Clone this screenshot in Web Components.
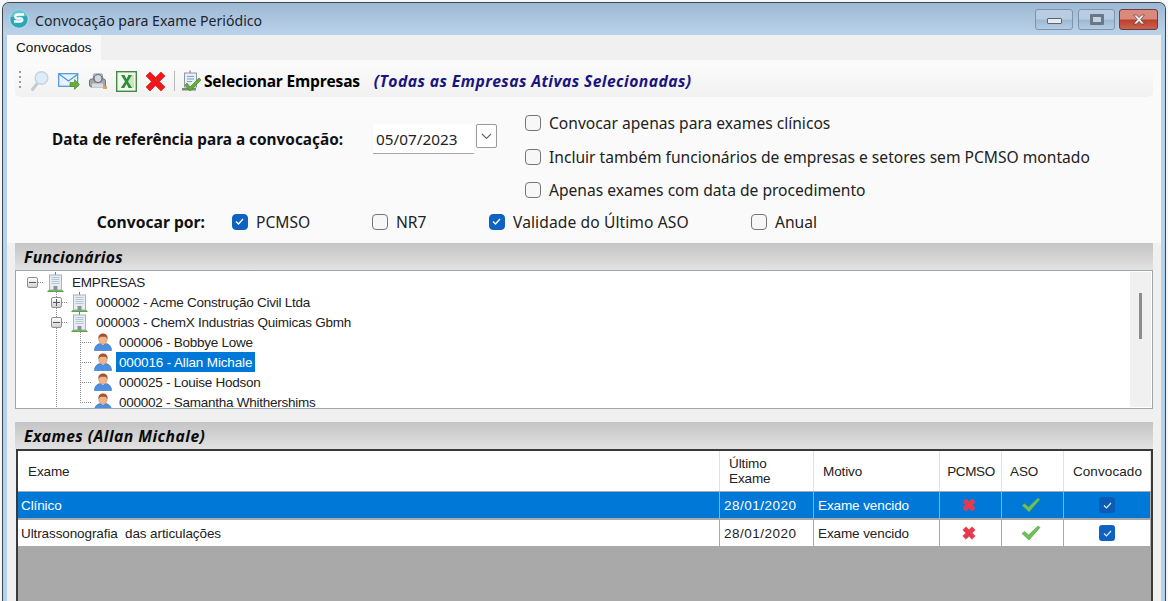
<!DOCTYPE html>
<html>
<head>
<meta charset="utf-8">
<title>Convocação para Exame Periódico</title>
<style>
    html, body { margin: 0; height: 100%; overflow: hidden; background: #f4f6f8; }
</style>
</head>
<body>
<app-window caption="Convocação para Exame Periódico">
    <tab-strip label="Convocados"></tab-strip>
    <page-form>
        <tool-bar></tool-bar>
        <convoke-form></convoke-form>
    </page-form>
    <page-lists>
        <section-header>Funcionários</section-header>
        <tree-view>
            <tree-node guides="" expander="minus" icon="building" kind="root">EMPRESAS</tree-node>
            <tree-node guides="b" expander="plus" icon="building" kind="company">000002 - Acme Construção Civil Ltda</tree-node>
            <tree-node guides="b" expander="minus" icon="building" kind="company">000003 - ChemX Industrias Quimicas Gbmh</tree-node>
            <tree-node guides="bv" icon="person" kind="person">000006 - Bobbye Lowe</tree-node>
            <tree-node guides="bv" icon="person" kind="person" selected>000016 - Allan Michale</tree-node>
            <tree-node guides="bv" icon="person" kind="person">000025 - Louise Hodson</tree-node>
            <tree-node guides="bl" icon="person" kind="person">000002 - Samantha Whithershims</tree-node>
        </tree-view>
        <section-header class="second">Exames (Allan Michale)</section-header>
        <exam-table>
            <exam-row selected exam="Clínico" last="28/01/2020" reason="Exame vencido"></exam-row>
            <exam-row exam="Ultrassonografia  das articulações" last="28/01/2020" reason="Exame vencido"></exam-row>
        </exam-table>
    </page-lists>
</app-window>

<script>
const ICONS = {
    logo: `<svg viewBox="0 0 20 20" width="20" height="20"><circle cx="10" cy="10" r="9.3" fill="#2aa7b8" stroke="#cfe3ea" stroke-width="1"/><path d="M2 8a8 8 0 0 1 16-1z" fill="#7fd0dc" opacity=".7"/><path d="M15 5.5H8.5C6 5.5 5.5 9 8 9.5h4c2 .3 1.6 3-.5 3H5" fill="none" stroke="#fff" stroke-width="2.4"/></svg>`,
    search: `<svg viewBox="0 0 20 22" width="20" height="22"><path d="M9 12.5 3.5 19.5" stroke="#c9c9c9" stroke-width="3" stroke-linecap="round"/><circle cx="12.5" cy="8" r="6.3" fill="#dcecf8" stroke="#c5d3de" stroke-width="1.4"/></svg>`,
    mail: `<svg viewBox="0 0 22 20" width="22" height="20"><rect x=".7" y="2.7" width="19" height="12.6" fill="#e6f2fc" stroke="#4d94d6" stroke-width="1.2"/><path d="M1 3l9.500 7 9.500-7" fill="none" stroke="#4d94d6" stroke-width="1.2"/><path d="M12 11.500h4.500V8.500l5 5-5 5v-3H12z" fill="#6cab3a" stroke="#487f22" stroke-width=".6"/></svg>`,
    print: `<svg viewBox="0 0 20 20" width="20" height="20"><path d="M6 3h8l1 5H5z" fill="#eef1f4" stroke="#8a8f96"/><rect x="1.500" y="8" width="16" height="8" rx="2" fill="#a4a8ae" stroke="#70757c"/><rect x="4" y="12.500" width="11" height="4" fill="#d8dadd"/><circle cx="10" cy="7.500" r="4" fill="#cfd9e4" stroke="#666c74" stroke-width="1.2"/><rect x="15" y="15" width="4" height="3" fill="#d7a651"/></svg>`,
    excel: `<svg viewBox="0 0 21 21" width="21" height="21"><rect x=".7" y=".7" width="19.600" height="19.600" fill="#f3f8ee" stroke="#3f8a3c" stroke-width="1.400"/><rect x="12" y="4" width="6" height="13" fill="#cfe4c4"/><path d="M5 4h3.500l2 4 2-4H16l-4 6.500 4.200 6.500h-3.600l-2.100-4-2.200 4H4.800L9 10.500z" fill="#2f8f35"/></svg>`,
    del: `<svg viewBox="0 0 21 21" width="21" height="21"><path d="M1 5l4-4 5.500 5.500L16 1l4 4-5.500 5.500L20 16l-4 4-5.500-5.500L5 20l-4-4 5.500-5.500z" fill="#f01818" stroke="#cf1212" stroke-width=".6"/></svg>`,
    doc: `<svg viewBox="0 0 21 22" width="21" height="22"><path d="M9 .5v3" stroke="#b04a3a"/><rect x="3.500" y="3" width="12" height="14" fill="#e8eef6" stroke="#8d97a5"/><path d="M6 6.500h7M6 9h7M6 11.500h5" stroke="#7fa3cc"/><path d="M1 18h14v2.500H1z" fill="#7a8b76"/><path d="M6 13l3 4 9-9 2 2-11 11-5-6z" fill="#5fae3a" stroke="#3f7f24" stroke-width=".6"/></svg>`,
    building: `<svg viewBox="0 0 17 20" width="17" height="20"><path d="M8.500 0v3" stroke="#c8574d"/><path d="M0 20l2.500-3h12l2.500 3z" fill="#57a845"/><rect x="2.500" y="3" width="12" height="15" fill="#e8ecf0" stroke="#a9b2bb"/><path d="M4.500 5.500h8M4.500 7.500h8M4.500 9.500h8M4.500 11.500h8" stroke="#b0c8dc" stroke-width="1.200"/><rect x="6.500" y="14" width="4" height="4" fill="#8b9299"/></svg>`,
    person: `<svg viewBox="0 0 18 18" width="18" height="18"><path d="M.5 17.500c0-5 3.500-6.500 5.500-7l3 2 3-2c2 .5 5.500 2 5.500 7z" fill="#4d8fe0" stroke="#2f6cbc" stroke-width=".6"/><ellipse cx="9" cy="6.500" rx="4.200" ry="4.800" fill="#f0b48c" stroke="#b97a50" stroke-width=".5"/><path d="M4.500 6C4 2 6.500.5 9 .5s5 1.500 4.500 5.500C12.500 4 11 3.500 9 3.800 7 3.500 5.500 4 4.500 6z" fill="#a5532a"/></svg>`,
    cross: `<svg viewBox="0 0 14 14" width="14" height="14"><path d="M.8 4 4 .8 7 3.800 10 .8 13.200 4 10.200 7l3 3-3.200 3.200-3-3-3 3L.8 10l3-3z" fill="#e8384e" stroke="#d8475c" stroke-width=".6" stroke-linejoin="round"/></svg>`,
    tick: `<svg viewBox="0 0 20 16" width="20" height="16"><path d="M1 8.500 3.500 6.500 7.500 10 17 1l2 1.500L8 15z" fill="#6cc15c" stroke="#4d9f40" stroke-width=".6" stroke-linejoin="round"/></svg>`
};

class UiIcon extends HTMLElement {
    connectedCallback() {
        this.attachShadow({ mode: 'open' });
        this.shadowRoot.innerHTML = `
            <style>:host { display: inline-flex; flex: none; } svg { display: block; }</style>
            ${ICONS[this.getAttribute('name')] || ''}`;
    }
}

class AppWindow extends HTMLElement {
    constructor() {
        super();
        this.attachShadow({ mode: 'open' });
        this.shadowRoot.innerHTML = `
            <style>
                :host {
                    display: flex;
                    flex-direction: column;
                    box-sizing: border-box;
                    margin: 2px 2px 0;
                    height: 599px;
                    border: 1px solid #3e444b;
                    border-bottom: 0;
                    border-radius: 7px 7px 0 0;
                    overflow: hidden;
                    background: #b5d2ec;
                    font-family: "Noto Sans", sans-serif;
                }
                .title {
                    display: flex;
                    align-items: center;
                    height: 32px;
                    flex: none;
                    padding: 0 7px 0 6px;
                    background: linear-gradient(#9db8d4, #bbd3ea);
                }
                .caption {
                    margin-left: 6px;
                    margin-top: 2px;
                    font-size: 14.100px;
                    color: #1d2530;
                    flex: 1;
                }
                .btn {
                    box-sizing: border-box;
                    height: 21px;
                    align-self: flex-start;
                    margin-top: 6px;
                    display: flex;
                    align-items: center;
                    justify-content: center;
                    border: 1px solid #7f93ab;
                    border-radius: 3px;
                    background: linear-gradient(#b9cde2 0 48%, #9cb7d2 52%, #b4cde4);
                }
                .min { width: 38px; margin-right: 5px; }
                .max { width: 37px; margin-right: 4px; }
                .close {
                    width: 39px;
                    border-color: #6e3a44;
                    background: linear-gradient(#d98a7c 0 48%, #bd3f28 52%, #c86450);
                }
                .min i { width: 13px; height: 4px; background: #e8eaee; border: 1px solid #5c6470; border-radius: 1px; margin-top: 2px; }
                .max i { width: 8px; height: 5px; border: 3px solid #6b7686; background: #c2d2e2; border-radius: 1px; }
                .close svg { display: block; }
                .body {
                    flex: 1;
                    min-height: 0;
                    display: flex;
                    flex-direction: column;
                    margin: 0 4px;
                    background: #f0f0f0;
                }
            </style>
            <div class="title">
                <ui-icon name="logo"></ui-icon>
                <span class="caption"></span>
                <div class="btn min"><i></i></div>
                <div class="btn max"><i></i></div>
                <div class="btn close">
                    <svg viewBox="0 0 14 11" width="14" height="11"><path d="M1.500 1h3.200L7 3.600 9.300 1h3.200L8.700 5.500l3.800 4.500H9.300L7 7.400 4.700 10H1.500l3.800-4.500z" fill="#f0f0f0" stroke="#5b3a3a" stroke-width=".7"/></svg>
                </div>
            </div>
            <div class="body"><slot></slot></div>`;
        this.shadowRoot.querySelector('.caption').textContent = this.getAttribute('caption');
    }
}

class TabStrip extends HTMLElement {
    constructor() {
        super();
        this.attachShadow({ mode: 'open' });
        this.shadowRoot.innerHTML = `
            <style>
                :host { display: flex; flex: none; height: 25px; background: #f0f0f0; }
                .tab {
                    display: flex;
                    align-items: center;
                    padding: 0 9px;
                    background: #fafafa;
                    font-family: "Liberation Sans", sans-serif;
                    font-size: 13.600px;
                    color: #111;
                }
            </style>
            <div class="tab"></div>`;
        this.shadowRoot.querySelector('.tab').textContent = this.getAttribute('label');
    }
}

class PageForm extends HTMLElement {
    constructor() {
        super();
        this.attachShadow({ mode: 'open' });
        this.shadowRoot.innerHTML = `
            <style>:host { display: block; flex: none; height: 183px; padding: 5px 8px 0; box-sizing: border-box; background: #fafafa; }</style>
            <slot></slot>`;
    }
}

class PageLists extends HTMLElement {
    constructor() {
        super();
        this.attachShadow({ mode: 'open' });
        this.shadowRoot.innerHTML = `
            <style>:host { display: flex; flex-direction: column; flex: 1; min-height: 0; padding-right: 8px; padding-left: 8px; }</style>
            <slot></slot>`;
    }
}

class ToolBar extends HTMLElement {
    constructor() {
        super();
        this.attachShadow({ mode: 'open' });
        this.shadowRoot.innerHTML = `
            <style>
                :host {
                    display: flex;
                    align-items: center;
                    height: 32px;
                    border-radius: 5px;
                    background: linear-gradient(#fbfbfb, #f1f1f1);
                    font-family: "Open Sans", sans-serif;
                }
                .grip { width: 2px; height: 20px; margin: 0 8px 0 4px; background: repeating-linear-gradient(#9a9a9a 0 2px, transparent 2px 5px); }
                ui-icon { margin-right: 8px; margin-left: 0; }
                ui-icon[name="mail"] { margin-left: 1px; }
                .sep { width: 1px; height: 20px; background: #b8b8b8; margin-right: 6px; }
                ui-icon.doc { margin-right: 2px; }
                b { font-size: 15.550px; color: #000; letter-spacing: -.2px; }
                em { font-size: 15.700px; font-weight: 700; color: #1b1480; margin-left: 14px; letter-spacing: .42px; }
            </style>
            <span class="grip"></span>
            <ui-icon name="search"></ui-icon>
            <ui-icon name="mail"></ui-icon>
            <ui-icon name="print"></ui-icon>
            <ui-icon name="excel"></ui-icon>
            <ui-icon name="del"></ui-icon>
            <span class="sep"></span>
            <ui-icon class="doc" name="doc"></ui-icon>
            <b>Selecionar Empresas</b>
            <em>(Todas as Empresas Ativas Selecionadas)</em>`;
    }
}

class CheckBox extends HTMLElement {
    constructor() {
        super();
        this.attachShadow({ mode: 'open' });
        this.shadowRoot.innerHTML = `
            <style>
                :host { display: inline-flex; align-items: center; gap: 8px; font-size: 15.600px; color: #222; }
                .box {
                    box-sizing: border-box;
                    width: 16px;
                    height: 16px;
                    flex: none;
                    border: 1.500px solid #767676;
                    border-radius: 4px;
                    background: #f7f7f7;
                }
                :host([checked]) .box { background: #0f62c0; border-color: #0f62c0; }
                svg { display: none; margin: 1px; }
                :host([checked]) svg { display: block; }
            </style>
            <span class="box"><svg viewBox="0 0 11 11" width="11" height="11"><path d="M2 5.500l2.500 2.500L9 3" fill="none" stroke="#fff" stroke-width="1.300"/></svg></span>
            <slot></slot>`;
    }
}

class ConvokeForm extends HTMLElement {
    constructor() {
        super();
        this.attachShadow({ mode: 'open' });
        this.shadowRoot.innerHTML = `
            <style>
                :host { display: block; font-family: "Noto Sans", sans-serif; font-size: 15.300px; color: #222; }
                .top { display: flex; height: 113px; }
                .label { font-weight: 700; font-size: 15.350px; color: #111; width: 321px; padding: 32px 0 0 37px; box-sizing: content-box; }
                .date { display: flex; align-items: flex-start; gap: 2px; width: 152px; padding-top: 27px; }
                .input {
                    box-sizing: border-box;
                    display: flex;
                    align-items: center;
                    width: 101px;
                    height: 30px;
                    padding-left: 3px;
                    background: #fff;
                    border-bottom: 1.500px solid #a8a8a8;
                }
                .drop {
                    box-sizing: border-box;
                    width: 21px;
                    height: 24px;
                    border: 1px solid #9a9a9a;
                    border-radius: 2px;
                    background: #fff;
                    display: flex;
                    align-items: center;
                    justify-content: center;
                }
                .opts { display: flex; flex-direction: column; gap: 13.500px; padding-top: 16px; }
                .opts check-box { height: 20px; }
                .by { display: flex; align-items: center; height: 24px; }
                .by b { text-align: right; box-sizing: border-box; width: 190px; font-size: 15.650px; color: #111; margin-right: 27px; }
                .c1 { width: 140px; }
                .c2 { width: 117px; }
                .c3 { width: 262px; letter-spacing: .1px; }
            </style>
            <div class="top">
                <div class="label">Data de referência para a convocação:</div>
                <div class="date">
                    <div class="input">05/07/2023</div>
                    <div class="drop"><svg viewBox="0 0 11 7" width="11" height="7"><path d="M1 1l4.500 4.500L10 1" fill="none" stroke="#666" stroke-width="1.100"/></svg></div>
                </div>
                <div class="opts">
                    <check-box>Convocar apenas para exames clínicos</check-box>
                    <check-box>Incluir também funcionários de empresas e setores sem PCMSO montado</check-box>
                    <check-box>Apenas exames com data de procedimento</check-box>
                </div>
            </div>
            <div class="by">
                <b>Convocar por:</b>
                <check-box class="c1" checked>PCMSO</check-box>
                <check-box class="c2">NR7</check-box>
                <check-box class="c3" checked>Validade do Último ASO</check-box>
                <check-box>Anual</check-box>
            </div>`;
    }
}

class SectionHeader extends HTMLElement {
    constructor() {
        super();
        this.attachShadow({ mode: 'open' });
        this.shadowRoot.innerHTML = `
            <style>
                :host {
                    display: flex;
                    align-items: center;
                    flex: none;
                    box-sizing: border-box;
                    height: 27px;
                    padding: 1px 0 0 9px;
                    background: linear-gradient(#c4c4c4, #e2e2e2);
                    font-family: "Open Sans", sans-serif;
                    font-size: 15.700px;
                    font-weight: 700;
                    font-style: italic;
                    letter-spacing: .3px;
                    color: #0a0a0a;
                }
                :host(.second) { margin-top: 13px; letter-spacing: .45px; }
            </style>
            <slot></slot>`;
    }
}

class TreeView extends HTMLElement {
    constructor() {
        super();
        this.attachShadow({ mode: 'open' });
        this.shadowRoot.innerHTML = `
            <style>
                :host {
                    display: flex;
                    flex: none;
                    box-sizing: border-box;
                    height: 139px;
                    border: 1px solid #a0a6ae;
                    background: #fff;
                    overflow: hidden;
                }
                .list { flex: 1; padding: 1px 0 0 4px; min-width: 0; }
                .bar { width: 21px; flex: none; background: #f0f0f0; margin: 1px 1px 1px 0; padding-top: 21px; box-sizing: border-box; display: flex; justify-content: center; }
                .bar i { width: 3px; height: 46px; background: #8c8c8c; margin-right: 1px; }
            </style>
            <div class="list"><slot></slot></div>
            <div class="bar"><i></i></div>`;
    }
}

class TreeNode extends HTMLElement {
    constructor() {
        super();
        this.attachShadow({ mode: 'open' });
        const guides = this.getAttribute('guides') || '';
        const expander = this.getAttribute('expander');
        const kind = this.getAttribute('kind');
        // one 24px cell per indent level, each one carries its own dotted line
        let cells = '';
        if (guides) cells += '<i class="cell"></i>';
        if (guides.includes('b') && kind === 'company') {
            cells += `<i class="cell v h"><span class="exp">${expander === 'plus' ? '<u></u>' : ''}<s></s></span></i>`;
        } else if (guides.includes('b')) {
            cells += '<i class="cell v"></i>';
            cells += `<i class="cell ${guides.includes('l') ? 'l' : 'v'} h"></i>`;
        } else {
            cells += '<i class="cell h"><span class="exp"><s></s></span></i>';
        }
        this.shadowRoot.innerHTML = `
            <style>
                :host {
                    display: flex;
                    align-items: center;
                    height: 20px;
                    font-family: "Liberation Sans", sans-serif;
                    font-size: 13.500px;
                    letter-spacing: -.25px;
                    color: #222;
                    white-space: pre;
                }
                .cell { position: relative; display: block; width: 24px; height: 20px; flex: none; }
                .v { background: repeating-linear-gradient(#8c8c8c 0 1px, transparent 1px 2px) 12px 0 / 1px 100% no-repeat; }
                .l { background: repeating-linear-gradient(#8c8c8c 0 1px, transparent 1px 2px) 12px 0 / 1px 10px no-repeat; }
                .h::after { content: ''; position: absolute; left: 12px; right: 0; top: 10px; height: 1px; background: repeating-linear-gradient(90deg, #8c8c8c 0 1px, transparent 1px 2px); }
                .exp {
                    position: absolute;
                    z-index: 1;
                    left: 7px;
                    top: 5px;
                    box-sizing: border-box;
                    width: 11px;
                    height: 11px;
                    border: 1px solid #8f8f8f;
                    border-radius: 2px;
                    background: linear-gradient(#fff, #cfcfcf);
                }
                .exp s { position: absolute; left: 1px; top: 4px; width: 7px; height: 1px; background: #556; }
                .exp u { position: absolute; left: 4px; top: 1px; width: 1px; height: 7px; background: #556; }
                ui-icon { margin: 0 6px 0 3px; }
                :host([kind="person"]) ui-icon { margin: 0 4px 0 2px; }
                .text { padding: 1px 3px 0 2px; line-height: 19px; }
                :host([kind="person"]) .text { padding: 1px 3px 0; }
                :host([selected]) .text { background: #0078d7; color: #fff; letter-spacing: -.15px; }
            </style>
            ${cells}
            <ui-icon name="${this.getAttribute('icon')}"></ui-icon>
            <span class="text"><slot></slot></span>`;
    }
}

const EXAM_COLS = '702px 94px 126px 62px 62px 87px';

class ExamTable extends HTMLElement {
    constructor() {
        super();
        this.attachShadow({ mode: 'open' });
        this.shadowRoot.innerHTML = `
            <style>
                :host {
                    display: block;
                    flex: 1;
                    margin-left: 1px;
                    border: 2px solid #3a3a3a;
                    border-bottom: 0;
                    background: #a9a9a9;
                    font-family: "Liberation Sans", sans-serif;
                    font-size: 13.500px;
                    color: #222;
                }
                .head {
                    display: grid;
                    grid-template-columns: ${EXAM_COLS};
                    height: 41px;
                    box-sizing: border-box;
                    align-items: stretch;
                    background: #fff;
                    border-bottom: 1px solid #a9a9a9;
                    letter-spacing: -.1px;
                }
                .head div {
                    display: flex;
                    align-items: center;
                    padding-left: 9px;
                    line-height: 15px;
                    border-right: 1px solid #e2e2e2;
                }
                .head .c { padding-left: 1px; justify-content: center; }
            </style>
            <div class="head">
                <div style="padding-left:10px">Exame</div>
                <div>Último<br>Exame</div>
                <div>Motivo</div>
                <div class="c" style="letter-spacing:-.4px">PCMSO</div>
                <div style="padding-left:8px">ASO</div>
                <div class="c" style="letter-spacing:.1px">Convocado</div>
            </div>
            <slot></slot>`;
    }
}

class ExamRow extends HTMLElement {
    constructor() {
        super();
        this.attachShadow({ mode: 'open' });
        this.shadowRoot.innerHTML = `
            <style>
                :host {
                    display: grid;
                    grid-template-columns: ${EXAM_COLS};
                    height: 28px;
                    box-sizing: border-box;
                    border-bottom: 2px solid #a9a9a9;
                    background: #fff;
                    white-space: pre;
                    letter-spacing: -.1px;
                }
                :host([selected]) { background: #0078d7; color: #fff; }
                div { display: flex; align-items: center; padding-left: 4px; border-right: 1px solid #a9a9a9; }
                .exam { padding-left: 3px; }
                .last { letter-spacing: .5px; }
                .c { justify-content: center; padding: 0; }
                .shift { padding-right: 3px; }
                .chk {
                    width: 16px;
                    height: 16px;
                    border-radius: 3px;
                    background: #0f62c0;
                    display: flex;
                    align-items: center;
                    justify-content: center;
                }
                :host([selected]) .chk { background: #0a5cb4; }
            </style>
            <div class="exam"></div>
            <div class="last"></div>
            <div class="reason"></div>
            <div class="c shift"><ui-icon name="cross"></ui-icon></div>
            <div class="c shift"><ui-icon name="tick"></ui-icon></div>
            <div class="c"><span class="chk"><svg viewBox="0 0 11 11" width="11" height="11"><path d="M2 5.500l2.500 2.500L9 3" fill="none" stroke="#dfe9f5" stroke-width="1.200"/></svg></span></div>`;
        for (const k of ['exam', 'last', 'reason'])
            this.shadowRoot.querySelector('.' + k).textContent = this.getAttribute(k);
    }
}

customElements.define('ui-icon', UiIcon);
customElements.define('app-window', AppWindow);
customElements.define('tab-strip', TabStrip);
customElements.define('page-form', PageForm);
customElements.define('page-lists', PageLists);
customElements.define('tool-bar', ToolBar);
customElements.define('check-box', CheckBox);
customElements.define('convoke-form', ConvokeForm);
customElements.define('section-header', SectionHeader);
customElements.define('tree-view', TreeView);
customElements.define('tree-node', TreeNode);
customElements.define('exam-table', ExamTable);
customElements.define('exam-row', ExamRow);
</script>
</body>
</html>
